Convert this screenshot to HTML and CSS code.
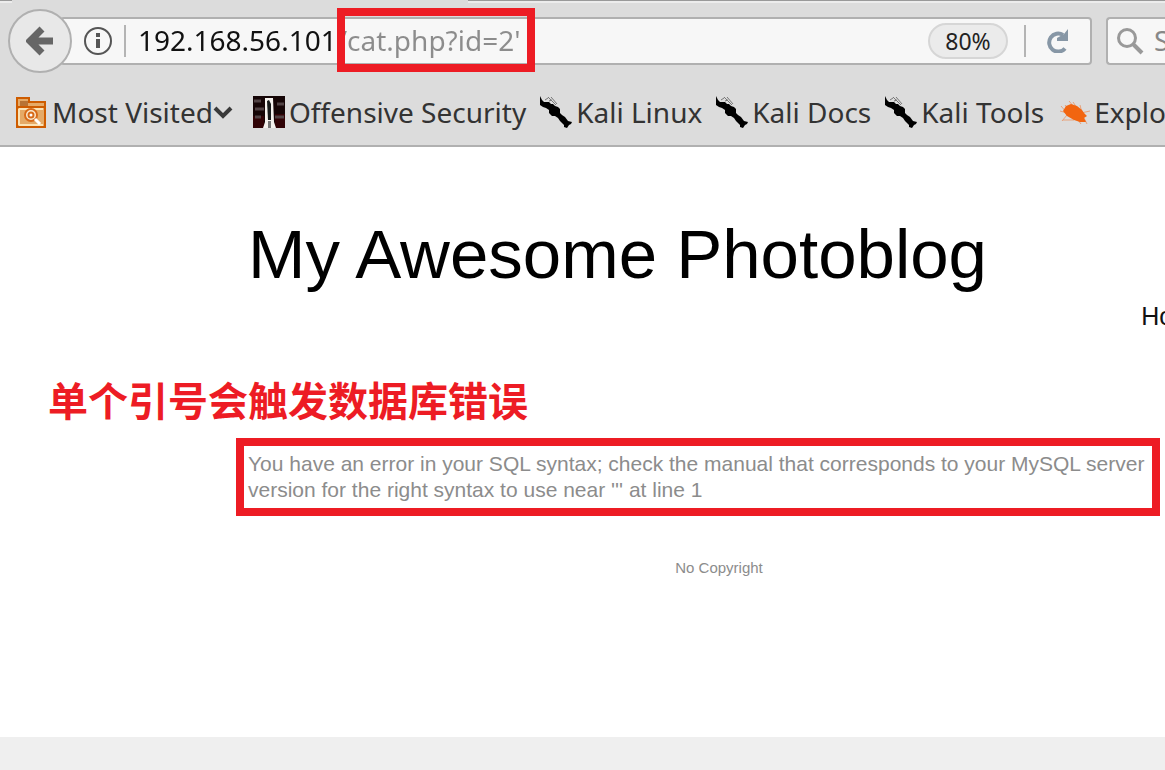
FILE: index.html
```html
<!DOCTYPE html>
<html lang="en">
<head>
<meta charset="utf-8">
<title>My Awesome Photoblog</title>
<link rel="stylesheet" href="styles.css">
</head>
<body>
<svg class="defs" aria-hidden="true">
  <symbol id="dragon" viewBox="0 0 32 32">
    <path fill="#000" d="M0 0 2 4 4 6 9 6 11 8 13 8 15 10 18 11 20 13 20 17 22 19 25 21 28 25 32 26 31 28 29 29 27 32 24 31 24 29 20 25 18 22 15 20 12 20 9 17 9 14 6 12 3 11 0 9Z"/>
    <path fill="none" stroke="#777" stroke-width="1" d="M5 4 8 2M8 1l8 8M11 1l6 7M12 4l-3 1"/>
  </symbol>
</svg>
<header class="browser">
  <div class="tabline"><span class="tab"></span></div>
  <div class="navbar">
    <button class="back" type="button" aria-label="Back">
      <svg width="28" height="32" viewBox="0 0 28 32"><path d="M16 4 4 16 16 28M5 16H27" fill="none" stroke="#666" stroke-width="7"/></svg>
    </button>
    <div class="urlbar">
      <button class="plain" type="button" aria-label="Site information">
        <svg width="28" height="28" viewBox="0 0 28 28"><circle cx="14" cy="14" r="13" fill="none" stroke="#555" stroke-width="2"/><path d="M12 6h4v4h-4zM12 12h4v9h-4z" fill="#555"/></svg>
      </button>
      <span class="divider"></span>
      <div class="address">
        <input class="url" type="text" aria-label="Address" value="192.168.56.101/cat.php?id=2'" spellcheck="false">
        <span class="url-mark"></span>
      </div>
      <button class="zoom" type="button">80%</button>
      <span class="divider"></span>
      <button class="plain reload" type="button" aria-label="Reload">
        <svg width="24" height="24" viewBox="0 0 24 24"><path d="M19 19.500A9 9 0 1 1 17 6" fill="none" stroke="#8797a6" stroke-width="4"/><path d="M22 0V12H11V9L18 5Z" fill="#8797a6"/></svg>
      </button>
    </div>
    <div class="searchbar">
      <svg width="28" height="28" viewBox="0 0 28 28"><circle cx="11" cy="11" r="8.500" fill="none" stroke="#999" stroke-width="3"/><path d="M17 17 26 26" stroke="#999" stroke-width="4"/></svg>
      <input class="search" type="text" aria-label="Search" placeholder="Search">
    </div>
  </div>
  <nav class="bookmarks" aria-label="Bookmarks">
    <button class="bookmark folder" type="button">
      <svg width="32" height="32" viewBox="0 0 32 32"><path d="M1 2H13V6H29V31H1Z" fill="#e5aa67" stroke="#ce5c00" stroke-width="2"/><path d="M4 5h8v5H4z" fill="#b87333"/><path d="M2 11H28" stroke="#ce5c00" stroke-width="2"/><path d="M3 13H27M3 29H27M3 13V29" fill="none" stroke="#fbe3b5" stroke-width="2"/><circle cx="15" cy="19" r="6" fill="#f9ead0" stroke="#d86a18" stroke-width="2"/><circle cx="15" cy="19" r="2.500" fill="#fff" stroke="#d86a18" stroke-width="2"/><path d="M19 23 24 28" stroke="#fff" stroke-width="3"/></svg>
      <span>Most Visited</span>
      <svg class="chevron" width="20" height="16" viewBox="0 0 20 16"><path d="M2 4 10 12 18 4" fill="none" stroke="#3a3a3a" stroke-width="4"/></svg>
    </button>
    <a class="bookmark" href="#">
      <svg width="32" height="32" viewBox="0 0 32 32"><path fill="#150506" d="M0 0h32v32H0z"/><path fill="#310306" d="M0 20h11v12H0zM22 18h10v14H22z"/><path d="M1 5h7M2 13h9M2 21h6M24 8h7M22 21h9" stroke="#514345" stroke-width="3"/><path fill="#f5f2ee" d="M12 2h8l1 24 2 6H10l2-6z"/><path fill="#161a1a" d="M14 5l2-1 2 4v16h-3z"/><path fill="#777" d="M15 25h3v7h-3z"/></svg>
      <span>Offensive Security</span>
    </a>
    <a class="bookmark" href="#"><svg width="32" height="32"><use href="#dragon"/></svg><span>Kali Linux</span></a>
    <a class="bookmark" href="#"><svg width="32" height="32"><use href="#dragon"/></svg><span>Kali Docs</span></a>
    <a class="bookmark" href="#"><svg width="32" height="32"><use href="#dragon"/></svg><span>Kali Tools</span></a>
    <a class="bookmark" href="#">
      <svg width="32" height="32" viewBox="0 -2 32 32"><path d="M3 8 9 15 2 13M7 7l4 5M11 3l5 6M15 4l4 6M22 7l2 8M23 15l9-2M26 20l3 6M20 22l3 4M16 22H5M9 17l-5 6" fill="none" stroke="#e7a17b" stroke-width="1"/><path fill="#f26510" d="M5 13 8 8 13 6 19 8 24 12 26 15 29 18 26 20 28 24 22 24 16 22 9 18Z"/></svg>
      <span>Exploit-DB</span>
    </a>
  </nav>
</header>
<main class="page">
  <h1 class="title">My Awesome Photoblog</h1>
  <nav class="menu"><a href="#">Home</a></nav>
  <p class="note" lang="zh-CN">单个引号会触发数据库错误</p>
  <p class="error">You have an error in your SQL syntax; check the manual that corresponds to your MySQL server version for the right syntax to use near ''' at line 1</p>
  <p class="copyright">No Copyright</p>
</main>
<footer class="statusbar"></footer>
</body>
</html>
```
FILE: styles.css
```css
* { box-sizing: border-box; }

body {
  margin: 0;
  min-height: 100vh;
  display: flex;
  flex-direction: column;
  overflow-x: hidden;
  background: #fff;
  font-family: "Liberation Sans", Arial, sans-serif;
}

button, input { font: inherit; color: inherit; }
button { border: 0; padding: 0; background: none; }
a { color: inherit; text-decoration: none; }
svg { display: block; flex: none; }
.defs { position: absolute; width: 0; height: 0; }

.browser {
  background: #dcdcdc;
  border-bottom: 2px solid #b0b0b0;
  font-family: "Noto Sans", "Open Sans", sans-serif;
  font-size: 28px;
  color: #333;
}

.tabline {
  height: 3px;
  border-top: 1px solid #999;
  border-bottom: 2px solid #ececec;
  padding-left: 12px;
}
.tab {
  display: block;
  width: 456px;
  height: 3px;
  margin-top: -1px;
  background: #dcdcdc;
}

.navbar {
  display: flex;
  align-items: center;
  height: 76px;
  padding-left: 8px;
}
.back {
  flex: none;
  z-index: 1;
  width: 64px;
  height: 64px;
  display: grid;
  place-items: center;
  border: 2px solid #b0b0b0;
  border-radius: 50%;
  background: #e8e8e8;
}
.urlbar {
  flex: 1;
  min-width: 0;
  height: 48px;
  display: flex;
  align-items: center;
  margin-left: -12px;
  padding: 0 20px 0 22px;
  border: 2px solid #b0b0b0;
  border-radius: 4px;
  background: #f7f7f7;
}
.divider {
  width: 2px;
  height: 32px;
  margin: 0 12px;
  background: #b4b4b4;
}
.address { position: relative; flex: 1; min-width: 0; }
.url {
  display: block;
  width: 100%;
  padding: 0 0 2px;
  border: 0;
  outline: 0;
  color: transparent;
  background: linear-gradient(90deg, #111 200px, #8c8c8c 200px);
  -webkit-background-clip: text;
  background-clip: text;
}
.url-mark {
  position: absolute;
  left: 199px;
  top: 50%;
  width: 198px;
  height: 64px;
  margin-top: -33px;
  border: 8px solid #ed1c24;
  pointer-events: none;
}
.zoom {
  width: 80px;
  height: 36px;
  margin-right: 4px;
  border: 2px solid #d6d6d6;
  border-radius: 18px;
  background: #ebebeb;
  font-size: 23px;
  line-height: 30px;
  color: #222;
}
.reload { margin-left: 8px; }

.searchbar {
  width: 59px;
  height: 48px;
  display: flex;
  align-items: center;
  gap: 10px;
  margin-left: 14px;
  padding-left: 8px;
  border: 2px solid #b0b0b0;
  border-right: 0;
  border-radius: 4px 0 0 4px;
  background: #f7f7f7;
}
.search {
  flex: 1;
  min-width: 0;
  padding: 0 0 2px;
  border: 0;
  background: transparent;
}
.search::placeholder { color: #888; opacity: 1; }

.bookmarks {
  display: flex;
  gap: 14px;
  height: 66px;
  padding: 0 0 0 16px;
  align-items: center;
  overflow: hidden;
  white-space: nowrap;
}
.bookmark { display: flex; align-items: center; gap: 4px; flex: none; }
.folder { margin-right: 6px; }
.chevron { margin-left: -4px; }

.page { flex: 1; padding: 66px 5px 0 236px; }
.title {
  margin: 0 0 0 12px;
  font-size: 69px;
  line-height: 84px;
  font-weight: 400;
  color: #000;
  white-space: nowrap;
}
.menu {
  display: flex;
  justify-content: flex-end;
  margin: 3px -48px 0 0;
  font-size: 25px;
  line-height: 32px;
  color: #111;
}
.note {
  margin: 39px 0 11px -188px;
  font-family: "Noto Sans CJK SC", sans-serif;
  font-size: 40px;
  line-height: 56px;
  font-weight: 700;
  color: #ed1c24;
}
.error {
  margin: 0;
  padding: 5px 0 5px 4px;
  border: 8px solid #ed1c24;
  font-size: 21px;
  line-height: 26px;
  color: #8c8c8c;
}
.copyright {
  margin: 42px 0 0 42px;
  font-size: 15px;
  line-height: 20px;
  text-align: center;
  color: #8c8c8c;
}
.statusbar { height: 33px; background: #efefef; }
```
